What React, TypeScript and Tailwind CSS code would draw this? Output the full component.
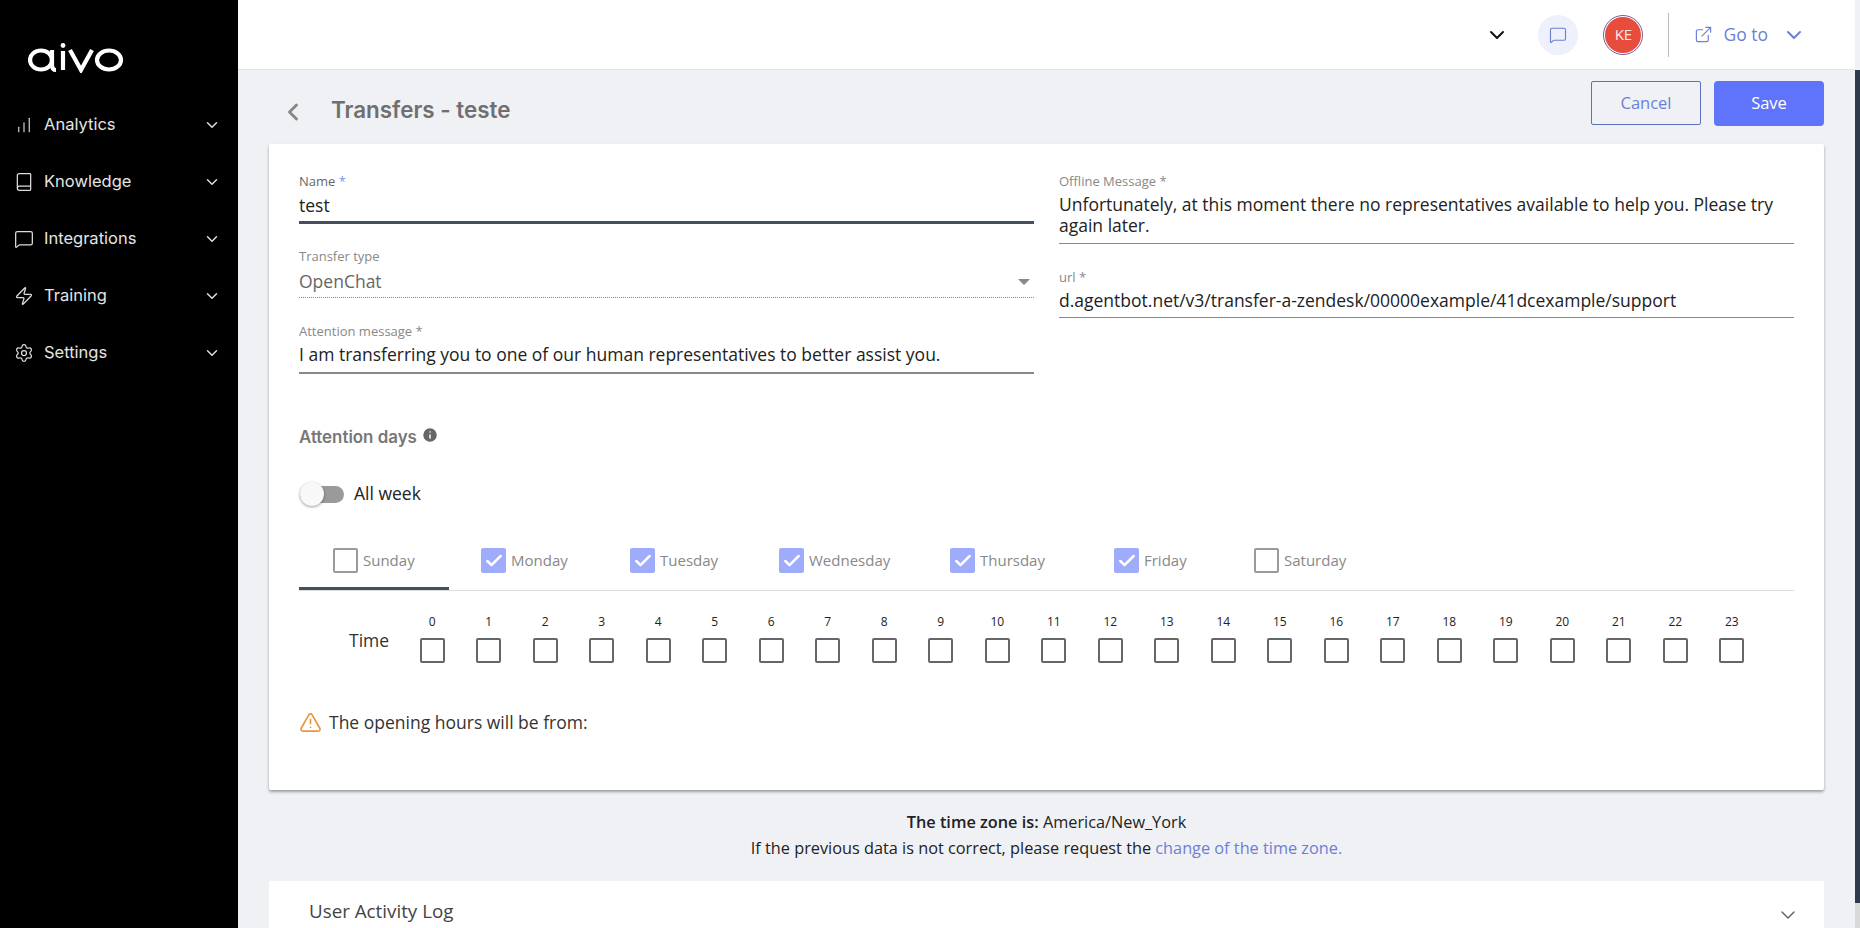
import { ChartNoAxesColumnIncreasing, Book, MessageSquare, Zap, Settings, ChevronDown, ChevronLeft, ExternalLink, Check, Info, AlertTriangle } from 'lucide-react';

const navItems = [
  { label: 'Analytics', icon: ChartNoAxesColumnIncreasing, iconClass: 'mx-px h-[18px] w-[18px]' },
  { label: 'Knowledge', icon: Book, iconClass: 'h-5 w-5' },
  { label: 'Integrations', icon: MessageSquare, iconClass: 'h-5 w-5' },
  { label: 'Training', icon: Zap, iconClass: 'h-5 w-5' },
  { label: 'Settings', icon: Settings, iconClass: 'h-5 w-5' },
];

const days = [
  { label: 'Sunday', checked: false, width: 'w-[150px]', pad: 'pl-[34px]' },
  { label: 'Monday', checked: true, width: 'w-[149px]', pad: 'pl-[32px]' },
  { label: 'Tuesday', checked: true, width: 'w-[149px]', pad: 'pl-[32px]' },
  { label: 'Wednesday', checked: true, width: 'w-[171px]', pad: 'pl-[32px]' },
  { label: 'Thursday', checked: true, width: 'w-[164px]', pad: 'pl-[32px]' },
  { label: 'Friday', checked: true, width: 'w-[140px]', pad: 'pl-[32px]' },
  { label: 'Saturday', checked: false, width: 'w-[150px]', pad: 'pl-[32px]' },
];

const hours = Array.from({ length: 24 }, (_, i) => i);

const App = () => {
  return (
    <div className="flex h-[928px] overflow-hidden bg-[#f0f1f5] font-['Open_Sans','Noto_Sans',sans-serif]">
      {/* Sidebar */}
      <aside className="w-[238px] shrink-0 bg-black font-['Inter',sans-serif] text-[#e4e4e4]">
        <svg className="ml-[28px] mt-[43px] h-[30px] w-[96px]" viewBox="0 0 96 30" fill="none" stroke="white" strokeWidth="4.2">
          <ellipse cx="13" cy="17" rx="11" ry="9.5" />
          <path d="M24 7v15q0 5 4 5" />
          <path d="M35 8v19" />
          <circle cx="35" cy="2.5" r="2.4" fill="white" stroke="none" />
          <path d="M42 7l11 20 11-20" />
          <ellipse cx="81" cy="17" rx="12" ry="9.5" />
        </svg>
        <nav className="mt-[23px] flex flex-col">
          {navItems.map((item) => {
            const Icon = item.icon;
            return (
              <div key={item.label} className="flex h-[57px] items-center pl-[14px] pr-[17px]">
                <Icon className={`${item.iconClass} text-[#ddd]`} strokeWidth={1.5} />
                <span className="ml-[10px] flex-1 text-[16.5px]">{item.label}</span>
                <ChevronDown className="h-[18px] w-[18px] text-[#ddd]" strokeWidth={2} />
              </div>
            );
          })}
        </nav>
      </aside>

      <div className="flex min-w-0 flex-1 flex-col">
        {/* Top bar */}
        <header className="flex h-[70px] shrink-0 items-center justify-end border-b border-[#e2e3e6] bg-white pr-[49px]">
          <ChevronDown className="mr-[29px] h-6 w-6 text-[#111]" strokeWidth={2} />
          <div className="mr-[25px] flex h-10 w-10 items-center justify-center rounded-full bg-[#eef0fb]">
            <MessageSquare className="h-[18px] w-[18px] text-[#6b7fd7]" strokeWidth={1.5} />
          </div>
          <div className="mr-[25px] h-10 w-10 rounded-full border border-[#7a5a9a] bg-white p-px">
            <div className="flex h-full w-full items-center justify-center rounded-full bg-[#e74c3c] text-[15px] text-[#fde8e4]">KE</div>
          </div>
          <div className="mr-[25px] h-[44px] w-px bg-[#bbb]" />
          <ExternalLink className="mr-[10px] h-[19px] w-[19px] text-[#6b7fd7]" strokeWidth={1.5} />
          <span className="mr-[14px] text-[17.5px] text-[#6b7fd7]">Go to</span>
          <ChevronDown className="h-6 w-6 text-[#6b7fd7]" strokeWidth={2} />
        </header>

        {/* Content */}
        <main className="flex flex-1 flex-col px-[31px]">
          <div className="flex h-[74px] shrink-0 items-start justify-between">
            <div className="mt-[24px] flex items-center font-['Inter',sans-serif]">
              <ChevronLeft className="ml-[10px] mt-1 h-7 w-7 text-[#888]" strokeWidth={2.5} />
              <h1 className="ml-[24px] text-[22.4px] font-semibold leading-7 text-[#6f6f6f]">Transfers - teste</h1>
            </div>
            <div className="mt-[11px] flex gap-[13px] text-[16.5px]">
              <button className="h-11 w-[110px] rounded-[2px] border border-[#5c6fc0] text-[#6b7fd7]">Cancel</button>
              <button className="h-[45px] w-[110px] rounded-[4px] bg-[#5f73fb] text-white">Save</button>
            </div>
          </div>

          {/* Card */}
          <section className="h-[646px] shrink-0 rounded-[2px] bg-white px-[30px] pt-[28px] shadow-[0_2px_3px_rgba(0,0,0,0.35)]">
            <div className="grid grid-cols-2 gap-x-[25px]">
              <div className="flex flex-col">
                <div className="border-b-[3px] border-[#44505e] pb-[3px]">
                  <div className="text-[13px] leading-[18px] text-[#666]">
                    Name <span className="text-[#7f8fe6]">*</span>
                  </div>
                  <div className="mt-[2px] text-[17.5px] leading-[26px] text-[#222]">test</div>
                </div>
                <div className="mt-[23px] border-b border-dotted border-[#888] pb-[3px]">
                  <div className="text-[13px] leading-[18px] text-[#888]">Transfer type</div>
                  <div className="mt-[3px] flex items-center justify-between text-[17.5px] leading-[26px] text-[#666]">
                    OpenChat
                    <span className="mr-[4px] mt-[1px] h-0 w-0 border-x-[6px] border-t-[6px] border-x-transparent border-t-[#888]" />
                  </div>
                </div>
                <div className="mt-[24px] border-b-2 border-[#888] pb-[5px]">
                  <div className="text-[13px] leading-[18px] text-[#888]">Attention message *</div>
                  <div className="mt-[1px] text-[17.5px] leading-[26px] text-[#222]">
                    I am transferring you to one of our human representatives to better assist you.
                  </div>
                </div>
              </div>
              <div className="flex flex-col">
                <div className="border-b border-[#888] pb-[7px]">
                  <div className="text-[13px] leading-[18px] text-[#888]">Offline Message *</div>
                  <div className="mt-[4px] text-[17.5px] leading-[21px] text-[#222]">
                    Unfortunately, at this moment there no representatives available to help you. Please try again later.
                  </div>
                </div>
                <div className="mt-[24px] border-b border-[#888] pb-[4px]">
                  <div className="text-[13px] leading-[18px] text-[#888]">url *</div>
                  <div className="mt-[1px] text-[17.5px] leading-[26px] text-[#222]">
                    d.agentbot.net/v3/transfer-a-zendesk/00000example/41dcexample/support
                  </div>
                </div>
              </div>
            </div>

            <div className="mt-[53px] flex items-start font-['Inter',sans-serif] text-[16.9px] font-semibold leading-5 text-[#777]">
              Attention days
              <Info className="ml-[4px] -mt-px h-[18px] w-[18px] fill-[#666] text-white" strokeWidth={2} />
            </div>

            <div className="mt-[35px] ml-px flex h-6 items-center">
              <div className="relative h-[17px] w-[44px] rounded-full bg-[#9a9a9a]">
                <span className="absolute left-0 top-[-4px] h-6 w-6 rounded-full bg-[#f8f8f8] shadow-[0_1px_3px_rgba(0,0,0,0.4)]" />
              </div>
              <span className="-mt-px ml-[10px] text-[17.5px] text-[#222]">All week</span>
            </div>

            {/* Day tabs */}
            <div className="mt-[28px] flex h-[57px] border-b border-[#ddd]">
              {days.map((day, i) => (
                <div key={day.label} className={`flex h-[56px] items-center border-b-[3px] ${day.width} ${day.pad} ${i === 0 ? 'border-[#44505e]' : 'border-transparent'}`}>
                  <span className={`flex h-[25px] w-[25px] items-center justify-center rounded-[2px] ${day.checked ? 'bg-[#9fabfb]' : 'border-2 border-[#9a9a9a]'}`}>
                    {day.checked && <Check className="h-5 w-5 text-white" strokeWidth={3} />}
                  </span>
                  <span className="-mt-px ml-[5px] text-[15px] text-[#888]">{day.label}</span>
                </div>
              ))}
            </div>

            {/* Hours */}
            <div className="mt-[23px] flex">
              <span className="ml-[50px] mt-[14px] w-[55px] text-[17.5px] leading-6 text-[#333]">Time</span>
              <div className="flex">
                {hours.map((h) => (
                  <div key={h} className="flex w-[56.5px] flex-col items-center">
                    <span className="text-xs leading-4 text-[#222]">{h}</span>
                    <span className="mt-2 h-[25px] w-[25px] rounded-[2px] border-2 border-[#666]" />
                  </div>
                ))}
              </div>
            </div>

            <div className="mt-[47px] flex items-center text-[17.5px] leading-6 text-[#333]">
              <AlertTriangle className="h-[23px] w-[23px] text-[#e8973a]" strokeWidth={1.75} />
              <span className="ml-[7px]">The opening hours will be from:</span>
            </div>
          </section>

          <div className="mt-[20px] text-center text-[16.3px] leading-[25.5px] text-[#222]">
            <div>
              <span className="font-semibold">The time zone is:</span> America/New_York
            </div>
            <div>
              If the previous data is not correct, please request the <span className="text-[#6b7fd7]">change of the time zone.</span>
            </div>
          </div>

          <div className="mt-[20px] flex h-[70px] shrink-0 items-start justify-between rounded-t-[2px] bg-white pl-10 pr-6 pt-4">
            <span className="text-[18.8px] leading-7 text-[#444]">User Activity Log</span>
            <ChevronDown className="mt-[6px] h-6 w-6 text-[#666]" strokeWidth={1.5} />
          </div>
        </main>
      </div>

      {/* Scrollbar */}
      <div className="mt-[70px] flex w-[5px] shrink-0 flex-col bg-[#d9d9d9]">
        <div className="h-[833px] bg-[#2f3b4c]" />
      </div>
    </div>
  );
};

export default App;
